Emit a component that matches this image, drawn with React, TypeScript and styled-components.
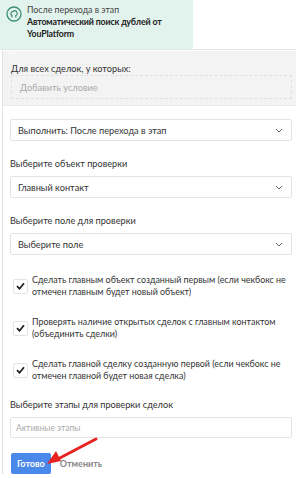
import React from "react";
import styled, { createGlobalStyle } from "styled-components";

const GlobalStyle = createGlobalStyle`
  html, body {
    margin: 0;
    padding: 0;
    background: #fff;
  }
  body {
    font-family: Lato, "Noto Sans", sans-serif;
    color: #333;
  }
`;

const Page = styled.div`
  width: 296px;
  height: 478px;
  overflow: hidden;
  position: relative;
`;

const Header = styled.div`
  display: flex;
  height: 49px;
  border-bottom: 1px solid #e4e4e4;
`;

const TriggerCard = styled.div`
  position: relative;
  width: 193px;
  background: #e2f2ec;
  display: flex;
  align-items: flex-start;
  gap: 5px;
  padding: 4px 4px 0 6px;
  box-sizing: border-box;
`;

const Caret = styled.div`
  position: absolute;
  left: 8px;
  bottom: -6px;
  width: 0;
  height: 0;
  border-left: 5px solid transparent;
  border-right: 5px solid transparent;
  border-bottom: 5px solid #f7f7f7;
  z-index: 2;
`;

const TriggerIcon = styled.div`
  width: 16px;
  height: 16px;
  flex-shrink: 0;
  margin-top: 2px;
`;

const TriggerText = styled.div`
  display: flex;
  flex-direction: column;
  font-size: 8.8px;
  line-height: 12px;
  white-space: nowrap;
`;

const TriggerSub = styled.span`
  color: #444;
`;

const TriggerTitle = styled.span`
  font-weight: 700;
  color: #222;
  letter-spacing: -0.15px;
`;

const Panel = styled.div`
  margin-left: 2px;
  border-left: 1px solid #e2e2e2;
  border-top: 1px solid #fff;
`;

const ConditionBlock = styled.div`
  background: #f3f3f3;
  padding: 11px 4px 6px 8px;
  border-bottom: 1px solid #ececec;
`;

const Body = styled.div`
  padding: 13px 4px 0 7px;
  display: flex;
  flex-direction: column;
`;

const Label = styled.div<{ $gap?: number }>`
  font-size: 9.2px;
  line-height: 13px;
  color: #333;
  white-space: nowrap;
  margin-bottom: ${(p) => p.$gap ?? 6}px;
`;

const DashedInput = styled.div`
  height: 22px;
  border: 1px dashed #e0e0e0;
  display: flex;
  align-items: center;
  padding-left: 8px;
  font-size: 9.2px;
  color: #aaa;
`;

const Select = styled.div<{ $gap?: number }>`
  height: 20px;
  border: 1px solid #e4e4e4;
  border-radius: 2px;
  display: flex;
  align-items: center;
  justify-content: space-between;
  padding: 0 8px 0 7px;
  font-size: 9.2px;
  color: #333;
  margin-bottom: ${(p) => p.$gap ?? 0}px;
`;

const Field = styled.div`
  margin-bottom: 16px;
`;

const CheckList = styled.div`
  padding-top: 3px;
  display: flex;
  flex-direction: column;
  gap: 18px;
  margin-bottom: 16px;
`;

const CheckRow = styled.div`
  display: flex;
  align-items: center;
  gap: 4px;
  padding-left: 3px;
`;

const Box = styled.div`
  width: 13px;
  height: 13px;
  border: 1px solid #e4e4e4;
  border-radius: 2px;
  background: #fff;
  display: flex;
  align-items: center;
  justify-content: center;
  flex-shrink: 0;
`;

const CheckText = styled.div`
  font-size: 8.9px;
  line-height: 12px;
  color: #333;
  white-space: nowrap;
`;

const TagInput = styled.div`
  height: 19px;
  border: 1px solid #e4e4e4;
  border-radius: 2px;
  display: flex;
  align-items: center;
  padding-left: 5px;
  font-size: 8.5px;
  color: #aaa;
  margin-bottom: 15px;
`;

const Actions = styled.div`
  display: flex;
  align-items: center;
  gap: 9px;
  padding-left: 1px;
`;

const PrimaryButton = styled.button`
  height: 21px;
  padding: 0 6px;
  border: none;
  border-radius: 2px;
  background: #4a88ea;
  color: #fff;
  font-family: inherit;
  font-size: 9px;
  font-weight: 700;
`;

const GhostButton = styled.button`
  border: none;
  background: none;
  padding: 0;
  color: #888;
  font-family: inherit;
  font-size: 9px;
  font-weight: 700;
`;

const Arrow = styled.svg`
  position: absolute;
  left: 44px;
  top: 436px;
`;

const Chevron = () => (
  <svg width="8" height="5" viewBox="0 0 8 5">
    <path d="M1 1l3 3 3-3" fill="none" stroke="#666" strokeWidth="1" />
  </svg>
);

const Tick = () => (
  <svg width="9" height="8" viewBox="0 0 9 8">
    <path d="M1 4.2l2.5 2.5L8 1.2" fill="none" stroke="#222" strokeWidth="1.8" />
  </svg>
);

const checks = [
  ["Сделать главным объект созданный первым (если чекбокс не", "отмечен главным будет новый объект)"],
  ["Проверять наличие открытых сделок с главным контактом", "(объединить сделки)"],
  ["Сделать главной сделку созданную первой (если чекбокс не", "отмечен главной будет новая сделка)"],
];

export default function App() {
  return (
    <Page>
      <GlobalStyle />
      <Header>
        <TriggerCard>
          <TriggerIcon>
            <svg width="16" height="16" viewBox="0 0 16 16">
              <circle cx="8" cy="8" r="7" fill="none" stroke="#3f8f74" strokeWidth="1.3" />
              <path
                d="M6 11.5V9.6C4.9 9 4.6 7.6 5.2 6.6c.5-.9 1.4-1.3 2.3-1.2.4-.8 1.6-1 2.2-.3.8.1 1.3.9 1.1 1.6.6.5.6 1.5 0 2L9.8 9.4V11.5"
                fill="none"
                stroke="#3f8f74"
                strokeWidth="1.2"
                strokeLinejoin="round"
              />
            </svg>
          </TriggerIcon>
          <TriggerText>
            <TriggerSub>После перехода в этап</TriggerSub>
            <TriggerTitle>Автоматический поиск дублей от</TriggerTitle>
            <TriggerTitle>YouPlatform</TriggerTitle>
          </TriggerText>
          <Caret />
        </TriggerCard>
      </Header>
      <Panel>
        <ConditionBlock>
          <Label $gap={0}>Для всех сделок, у которых:</Label>
          <DashedInput>Добавить условие</DashedInput>
        </ConditionBlock>
        <Body>
          <Select $gap={16}>
            <span>Выполнить: После перехода в этап</span>
            <Chevron />
          </Select>
          <Field>
            <Label>Выберите объект проверки</Label>
            <Select>
              <span>Главный контакт</span>
              <Chevron />
            </Select>
          </Field>
          <Field>
            <Label>Выберите поле для проверки</Label>
            <Select>
              <span>Выберите поле</span>
              <Chevron />
            </Select>
          </Field>
          <CheckList>
            {checks.map(([a, b]) => (
              <CheckRow key={a}>
                <Box>
                  <Tick />
                </Box>
                <CheckText>
                  {a}
                  <br />
                  {b}
                </CheckText>
              </CheckRow>
            ))}
          </CheckList>
          <Label>Выберите этапы для проверки сделок</Label>
          <TagInput>Активные этапы</TagInput>
          <Actions>
            <PrimaryButton>Готово</PrimaryButton>
            <GhostButton>Отменить</GhostButton>
          </Actions>
        </Body>
      </Panel>
      <Arrow width="56" height="32" viewBox="0 0 56 32">
        <path d="M52 3L12 24" stroke="#e8231f" strokeWidth="3" strokeLinecap="round" />
        <path d="M3 28l9-13 5 10z" fill="#e8231f" />
      </Arrow>
    </Page>
  );
}
